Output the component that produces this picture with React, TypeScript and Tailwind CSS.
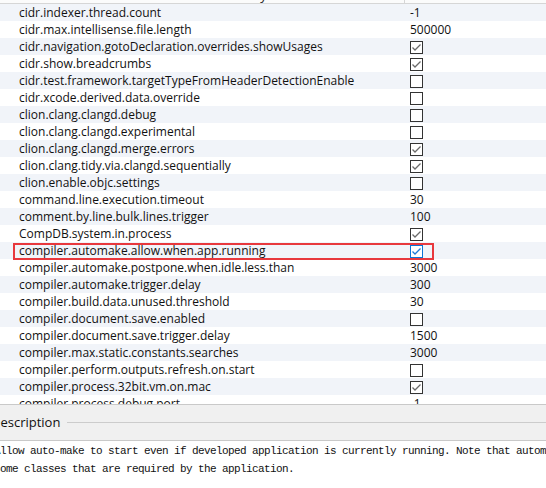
import React from 'react';

type Value = string | boolean;

const rows: [string, Value][] = [
  ['cidr.indexer.thread.count', '-1'],
  ['cidr.max.intellisense.file.length', '500000'],
  ['cidr.navigation.gotoDeclaration.overrides.showUsages', true],
  ['cidr.show.breadcrumbs', true],
  ['cidr.test.framework.targetTypeFromHeaderDetectionEnable', false],
  ['cidr.xcode.derived.data.override', false],
  ['clion.clang.clangd.debug', false],
  ['clion.clang.clangd.experimental', false],
  ['clion.clang.clangd.merge.errors', true],
  ['clion.clang.tidy.via.clangd.sequentially', true],
  ['clion.enable.objc.settings', false],
  ['command.line.execution.timeout', '30'],
  ['comment.by.line.bulk.lines.trigger', '100'],
  ['CompDB.system.in.process', true],
  ['compiler.automake.allow.when.app.running', true],
  ['compiler.automake.postpone.when.idle.less.than', '3000'],
  ['compiler.automake.trigger.delay', '300'],
  ['compiler.build.data.unused.threshold', '30'],
  ['compiler.document.save.enabled', false],
  ['compiler.document.save.trigger.delay', '1500'],
  ['compiler.max.static.constants.searches', '3000'],
  ['compiler.perform.outputs.refresh.on.start', false],
  ['compiler.process.32bit.vm.on.mac', true],
  ['compiler.process.debug.port', '-1'],
];

const Check = ({ on, focus }: { on: boolean; focus?: boolean }) => (
  <span
    className={`mt-[1px] block h-[13px] w-[13px] border bg-white ${focus ? 'border-[#0a74d6]' : 'border-[#333333]'}`}
  >
    {on && (
      <svg viewBox="0 0 11 11" className="h-[11px] w-[11px]">
        <polyline
          points="1.5,5.5 4,8 9.5,2.5"
          fill="none"
          stroke={focus ? '#1a7ad8' : '#6a6a6a'}
          strokeWidth="1.3"
        />
      </svg>
    )}
  </span>
);

export default function App() {
  return (
    <div
      className="relative flex h-[488px] w-[546px] flex-col overflow-hidden bg-white text-[#111111]"
      style={{ fontFamily: '"Open Sans", "Noto Sans", sans-serif' }}
    >
      {/* column header, mostly scrolled away */}
      <div className="relative h-[4px] shrink-0 overflow-hidden border-b border-[#d6d6d6] bg-[#fbfbfb]">
        <div className="-mt-[13px] flex h-[17px] text-[13px] leading-[17px] text-[#222]">
          <div className="w-[405px] border-r border-[#d6d6d6] pl-[245px]">Key</div>
          <div className="flex-1" />
        </div>
      </div>

      {/* property rows */}
      <div className="relative h-[400px] shrink-0 overflow-hidden">
        {rows.map(([key, val], i) => (
          <div
            key={key}
            className={`flex h-[17px] items-center text-[12px] leading-[17px] ${i % 2 === 0 ? 'bg-[#f1f4f9]' : 'bg-white'}`}
          >
            <div className="w-[410px] shrink-0 whitespace-nowrap pl-[19px]">{key}</div>
            <div className="flex-1">
              {typeof val === 'boolean' ? <Check on={val} focus={i === 14} /> : val}
            </div>
          </div>
        ))}
        {/* annotation box */}
        <div className="pointer-events-none absolute left-[13px] top-[239px] h-[17px] w-[421px] border-2 border-[#e8383d]" />
      </div>

      {/* description group */}
      <div className="flex h-[37px] shrink-0 items-center border-t border-b border-[#c9c9c9] bg-[#f0f0f0]">
        <span className="-ml-[9px] text-[13px] leading-[17px] text-[#111]">Description</span>
        <div className="ml-[7px] mt-[-1px] h-px flex-1 bg-[#cccccc]" />
      </div>
      <div
        className="flex-1 overflow-hidden whitespace-pre pt-[1px] text-[11px] leading-[18px] tracking-[-0.6px] text-[#111]"
        style={{ fontFamily: '"Liberation Mono", monospace' }}
      >
        <div className="-ml-[6px]">Allow auto-make to start even if developed application is currently running. Note that automake may delete</div>
        <div className="-ml-[6px]">some classes that are required by the application.</div>
      </div>
    </div>
  );
}
